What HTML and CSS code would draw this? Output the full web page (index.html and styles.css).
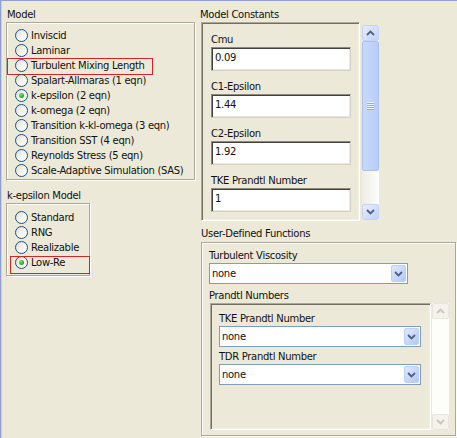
FILE: index.html
```html
<!DOCTYPE html>
<html lang="en">
<head>
  <meta charset="UTF-8">
  <title>Viscous Model</title>
  <link rel="stylesheet" href="styles.css">
</head>
<body>
  <div class="window">
    <div class="col-left">
      <div class="group-title">Model</div>
      <div class="group group-model">
        <div class="radio"><span class="dot"></span>Inviscid</div>
        <div class="radio"><span class="dot"></span>Laminar</div>
        <div class="radio hl hl-tml"><span class="dot"></span>Turbulent Mixing Length</div>
        <div class="radio"><span class="dot"></span>Spalart-Allmaras (1 eqn)</div>
        <div class="radio"><span class="dot checked"></span>k-epsilon (2 eqn)</div>
        <div class="radio"><span class="dot"></span>k-omega (2 eqn)</div>
        <div class="radio"><span class="dot"></span>Transition k-kl-omega (3 eqn)</div>
        <div class="radio"><span class="dot"></span>Transition SST (4 eqn)</div>
        <div class="radio"><span class="dot"></span>Reynolds Stress (5 eqn)</div>
        <div class="radio"><span class="dot"></span>Scale-Adaptive Simulation (SAS)</div>
      </div>

      <div class="group-title title-kep">k-epsilon Model</div>
      <div class="group group-kep">
        <div class="radio"><span class="dot"></span>Standard</div>
        <div class="radio"><span class="dot"></span>RNG</div>
        <div class="radio"><span class="dot"></span>Realizable</div>
        <div class="radio hl hl-low"><span class="dot checked"></span>Low-Re</div>
      </div>
    </div>

    <div class="col-right">
      <div class="group-title title-const">Model Constants</div>
      <div class="constants">
        <div class="sunken const-panel">
          <div class="field">
            <div class="field-label">Cmu</div>
            <div class="textbox">0.09</div>
          </div>
          <div class="field">
            <div class="field-label">C1-Epsilon</div>
            <div class="textbox">1.44</div>
          </div>
          <div class="field">
            <div class="field-label">C2-Epsilon</div>
            <div class="textbox">1.92</div>
          </div>
          <div class="field">
            <div class="field-label">TKE Prandtl Number</div>
            <div class="textbox">1</div>
          </div>
        </div>
        <div class="vscroll const-scroll">
          <div class="sb-btn">
            <svg width="9" height="6" viewBox="0 0 9 6"><path d="M1 5 L4.5 1.5 L8 5" fill="none" stroke="#4d6185" stroke-width="1.8"/></svg>
          </div>
          <div class="sb-thumb"><span class="grip"></span></div>
          <div class="sb-track"></div>
          <div class="sb-btn">
            <svg width="9" height="6" viewBox="0 0 9 6"><path d="M1 1 L4.5 4.5 L8 1" fill="none" stroke="#4d6185" stroke-width="1.8"/></svg>
          </div>
        </div>
      </div>

      <div class="group-title title-udf">User-Defined Functions</div>
      <div class="group group-udf">
        <div class="field-label">Turbulent Viscosity</div>
        <div class="combo combo-wide">
          <span>none</span>
          <span class="combo-btn">
            <svg width="9" height="6" viewBox="0 0 9 6"><path d="M1 1 L4.5 4.5 L8 1" fill="none" stroke="#4d6185" stroke-width="1.8"/></svg>
          </span>
        </div>
        <div class="field-label prandtl-title">Prandtl Numbers</div>
        <div class="prandtl">
          <div class="sunken prandtl-panel">
            <div class="field-label">TKE Prandtl Number</div>
            <div class="combo">
              <span>none</span>
              <span class="combo-btn">
                <svg width="9" height="6" viewBox="0 0 9 6"><path d="M1 1 L4.5 4.5 L8 1" fill="none" stroke="#4d6185" stroke-width="1.8"/></svg>
              </span>
            </div>
            <div class="field-label tdr-label">TDR Prandtl Number</div>
            <div class="combo">
              <span>none</span>
              <span class="combo-btn">
                <svg width="9" height="6" viewBox="0 0 9 6"><path d="M1 1 L4.5 4.5 L8 1" fill="none" stroke="#4d6185" stroke-width="1.8"/></svg>
              </span>
            </div>
          </div>
          <div class="vscroll disabled">
            <div class="sb-btn">
              <svg width="9" height="6" viewBox="0 0 9 6"><path d="M1 5 L4.5 1.5 L8 5" fill="none" stroke="#c9c7ba" stroke-width="1.8"/></svg>
            </div>
            <div class="sb-track"></div>
            <div class="sb-btn">
              <svg width="9" height="6" viewBox="0 0 9 6"><path d="M1 1 L4.5 4.5 L8 1" fill="none" stroke="#c9c7ba" stroke-width="1.8"/></svg>
            </div>
          </div>
        </div>
      </div>
    </div>
  </div>
</body>
</html>
```

FILE: styles.css
```css
* {
  margin: 0;
  padding: 0;
  box-sizing: border-box;
}

body {
  background: #ece9d8;
}

.window {
  width: 457px;
  height: 438px;
  display: flex;
  background: #ece9d8;
  font-family: "DejaVu Sans", Tahoma, sans-serif;
  font-size: 10px;
  letter-spacing: -0.3px;
  color: #111;
  box-shadow: inset 1px 1px 0 #8ea0cb, inset 2px 0 0 #c6d1ea;
  overflow: hidden;
}

/* Left column */
.col-left {
  width: 195px;
  flex: none;
  padding-left: 6px;
}

.group-title {
  height: 22px;
  padding-top: 8px;
  padding-left: 1px;
  line-height: 14px;
  white-space: nowrap;
}

.group {
  border: 1px solid #aca899;
  box-shadow: inset 1px 1px 0 #fff, 1px 1px 0 #fff;
}

.group-model {
  width: 189px;
  height: 158px;
  padding: 5px 0 0 8px;
}

.title-kep {
  height: 23px;
  padding-top: 9px;
}

.group-kep {
  width: 84px;
  height: 73px;
  padding: 6px 0 0 8px;
}

.radio {
  display: flex;
  align-items: center;
  height: 15px;
  width: fit-content;
  white-space: nowrap;
  position: relative;
}

.dot {
  width: 13px;
  height: 13px;
  margin-right: 3px;
  flex: none;
  border-radius: 50%;
  border: 1px solid #1c5180;
  background: linear-gradient(135deg, #dcdad0 0%, #f2f1ea 45%, #fff 100%);
  display: flex;
  align-items: center;
  justify-content: center;
}

.dot.checked::after {
  content: '';
  width: 5px;
  height: 5px;
  border-radius: 50%;
  background: radial-gradient(circle at 35% 35%, #7ee07e, #21a121 70%);
}

/* red highlight frames */
.hl::after {
  content: '';
  position: absolute;
  border: 1px solid #d42424;
}

.hl-tml::after {
  left: -8px;
  width: 144px;
  top: 0;
  height: 15px;
}

.hl-low::after {
  left: -5px;
  width: 78px;
  top: 1px;
  height: 16px;
}

/* Right column */
.col-right {
  width: 256px;
  flex: none;
  margin-left: 6px;
}

.title-const {
  margin-left: -1px;
  padding-left: 0;
}

.constants {
  display: flex;
  height: 199px;
}

.sunken {
  border-style: solid;
  border-width: 1px;
  border-color: #aca899 #fff #fff #aca899;
  box-shadow: inset 1px 1px 0 #716f64, inset -1px -1px 0 #f1efe2;
  overflow: hidden;
}

.const-panel {
  width: 159px;
  height: 199px;
  padding: 9px 0 0 9px;
}

.field {
  margin-bottom: 8px;
}

.field-label {
  height: 15px;
  line-height: 15px;
  white-space: nowrap;
}

.textbox {
  width: 140px;
  height: 24px;
  padding: 4px 0 0 3px;
  line-height: 12px;
  background: #fff;
  border-style: solid;
  border-width: 1px;
  border-color: #8c8a80 #d4d0c8 #d4d0c8 #8c8a80;
  box-shadow: inset 1px 1px 0 #404040, inset -1px -1px 0 #ece9d8;
}

/* Scrollbars */
.vscroll {
  width: 17px;
  flex: none;
  display: flex;
  flex-direction: column;
  background: linear-gradient(90deg, #eeede5, #fdfdfa);
}

.const-scroll {
  margin-left: 2px;
  margin-top: 3px;
  height: 195px;
}

.sb-btn {
  height: 16px;
  flex: none;
  display: flex;
  align-items: center;
  justify-content: center;
  border: 1px solid #c3d3fd;
  border-radius: 2px;
  background: linear-gradient(135deg, #e6eefc, #c1d3fb);
}

.sb-thumb {
  height: 130px;
  flex: none;
  display: flex;
  align-items: center;
  justify-content: center;
  border: 1px solid #a9bff5;
  border-radius: 2px;
  background: linear-gradient(90deg, #c9d8fc, #b9cdfa);
}

.grip {
  width: 7px;
  height: 8px;
  background: repeating-linear-gradient(180deg, #eef3fe 0 1px, #8caaf0 1px 2px);
}

.sb-track {
  flex: 1;
}

.vscroll.disabled {
  margin-left: 1px;
  height: 127px;
  background: #fdfdfa;
}

.vscroll.disabled .sb-btn {
  border-color: #e8e6dc;
  background: #f3f2ec;
}

/* User-defined functions */
.title-udf {
  height: 21px;
  padding-top: 6px;
  padding-left: 0;
}

.group-udf {
  width: 255px;
  height: 194px;
  padding: 6px 0 0 7px;
}

.group-udf .field-label {
  height: 14px;
  line-height: 14px;
}

.combo {
  width: 202px;
  height: 21px;
  display: flex;
  align-items: center;
  padding-left: 2px;
  border: 1px solid #7f9db9;
  background: #fff;
}

.combo-wide {
  width: 199px;
}

.combo-btn {
  margin-left: auto;
  margin-right: 1px;
  width: 15px;
  height: 17px;
  display: flex;
  align-items: center;
  justify-content: center;
  border: 1px solid #bad0fc;
  border-radius: 2px;
  background: linear-gradient(135deg, #dfe8fd, #b4c8f6);
}

.group-udf .prandtl-title {
  margin-top: 5px;
}

.prandtl {
  display: flex;
  height: 127px;
  margin-left: 1px;
}

.prandtl-panel {
  width: 221px;
  height: 127px;
  padding: 8px 0 0 8px;
}

.group-udf .tdr-label {
  margin-top: 3px;
}
```
